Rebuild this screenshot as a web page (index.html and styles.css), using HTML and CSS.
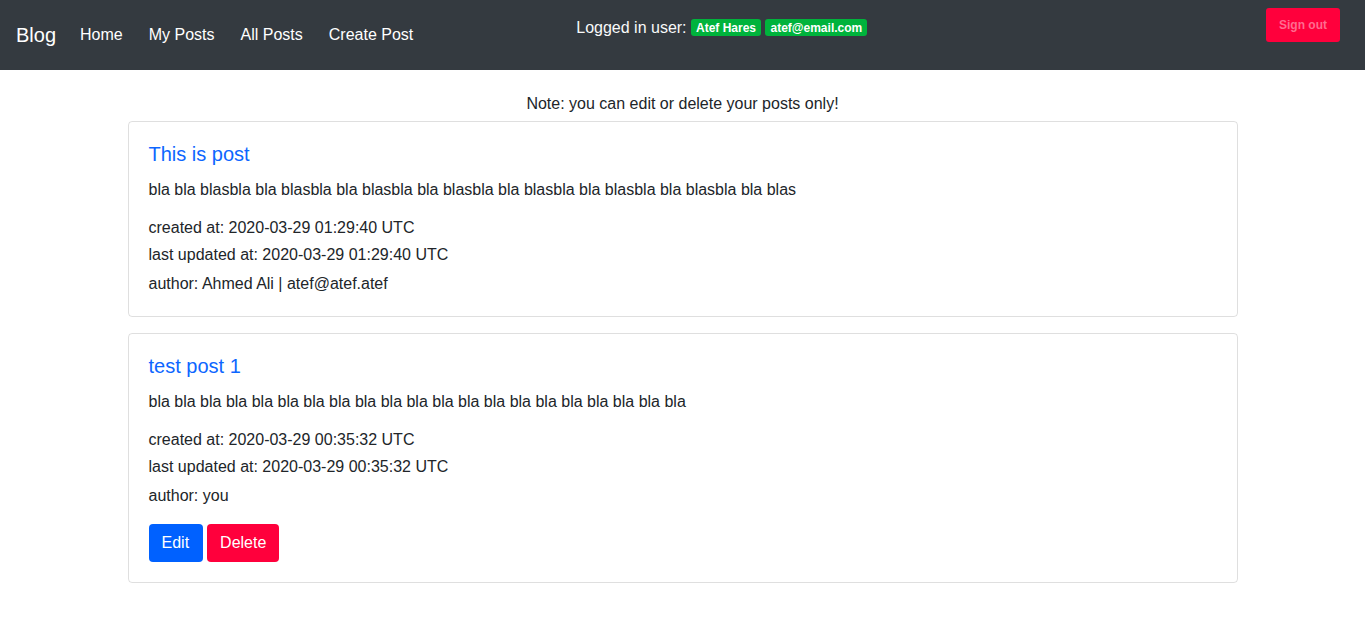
FILE: index.html
```html
<!DOCTYPE html>
<html>
<head>
<meta charset="utf-8">
<title>Blog</title>
<link rel="stylesheet" href="styles.css">
</head>
<body>
<nav class="navbar">
  <a class="brand" href="#">Blog</a>
  <ul class="nav">
    <li><a class="nav-link" href="#">Home</a></li>
    <li><a class="nav-link" href="#">My Posts</a></li>
    <li><a class="nav-link" href="#">All Posts</a></li>
    <li><a class="nav-link" href="#">Create Post</a></li>
  </ul>
  <div class="user">Logged in user: <span class="badge">Atef Hares</span> <span class="badge">atef@email.com</span></div>
  <button class="signout">Sign out</button>
</nav>
<main class="container">
  <p class="note">Note: you can edit or delete your posts only!</p>
  <div class="card">
    <h5 class="card-title">This is post</h5>
    <p class="card-text">bla bla blasbla bla blasbla bla blasbla bla blasbla bla blasbla bla blasbla bla blasbla bla blas</p>
    <div class="meta created">created at: 2020-03-29 01:29:40 UTC</div>
    <div class="meta updated">last updated at: 2020-03-29 01:29:40 UTC</div>
    <div class="meta author">author: Ahmed Ali | atef@atef.atef</div>
  </div>
  <div class="card">
    <h5 class="card-title">test post 1</h5>
    <p class="card-text">bla bla bla bla bla bla bla bla bla bla bla bla bla bla bla bla bla bla bla bla bla</p>
    <div class="meta created">created at: 2020-03-29 00:35:32 UTC</div>
    <div class="meta updated">last updated at: 2020-03-29 00:35:32 UTC</div>
    <div class="meta author">author: you</div>
    <div class="actions">
      <button class="btn btn-edit">Edit</button>
      <button class="btn btn-delete">Delete</button>
    </div>
  </div>
</main>
</body>
</html>
```
FILE: styles.css
```css
* { box-sizing: border-box; }
body {
  margin: 0;
  font-family: "Liberation Sans", Arial, sans-serif;
  font-size: 16px;
  line-height: 1.5;
  color: #212529;
  background: #fff;
}
.navbar {
  height: 70px;
  background: #343a40;
  display: flex;
  align-items: flex-start;
  padding: 0 25px 0 16px;
}
.brand {
  color: #fff;
  text-decoration: none;
  font-size: 20px;
  line-height: 30px;
  margin-top: 20px;
  margin-right: 11px;
}
.nav {
  list-style: none;
  margin: 0;
  padding: 0;
  display: flex;
  margin-top: 23px;
}
.nav-link {
  display: block;
  color: #fff;
  text-decoration: none;
  padding: 0 13px;
  line-height: 24px;
}
.user {
  color: #f8f9fa;
  margin-left: 150px;
  margin-top: 16px;
  line-height: 24px;
}
.badge {
  display: inline-block;
  background: #00b33c;
  color: #fff;
  font-size: 12px;
  font-weight: 700;
  line-height: 1;
  padding: 3px 5px 2px;
  border-radius: 3px;
  vertical-align: 1px;
}
.signout {
  margin-left: auto;
  margin-top: 8px;
  height: 34px;
  width: 74px;
  background: #ff003c;
  border: none;
  border-radius: 3px;
  color: #ff6b8f;
  font-family: inherit;
  font-size: 12px;
  font-weight: 700;
}
.container {
  width: 1110px;
  margin: 0 auto;
  padding-top: 22px;
}
.note {
  text-align: center;
  margin: 0 0 5px;
}
.card {
  border: 1px solid rgba(0,0,0,.125);
  border-radius: 4px;
  padding: 20px;
  margin-bottom: 16px;
}
.card-title {
  margin: 0 0 12px;
  font-size: 20px;
  font-weight: 400;
  line-height: 24px;
  color: #0d66ff;
}
.card-text { margin: 0 0 14px; }
.meta { line-height: 24px; }
.updated { margin-top: 3px; }
.author { margin-top: 5px; }
.actions { margin-top: 16px; display: flex; gap: 4px; }
.btn {
  height: 38px;
  padding: 0 13px;
  border: none;
  border-radius: 4px;
  color: #fff;
  font-family: inherit;
  font-size: 16px;
}
.btn-edit { background: #0061ff; padding-right: 14px; }
.btn-delete { background: #ff003c; }
```
